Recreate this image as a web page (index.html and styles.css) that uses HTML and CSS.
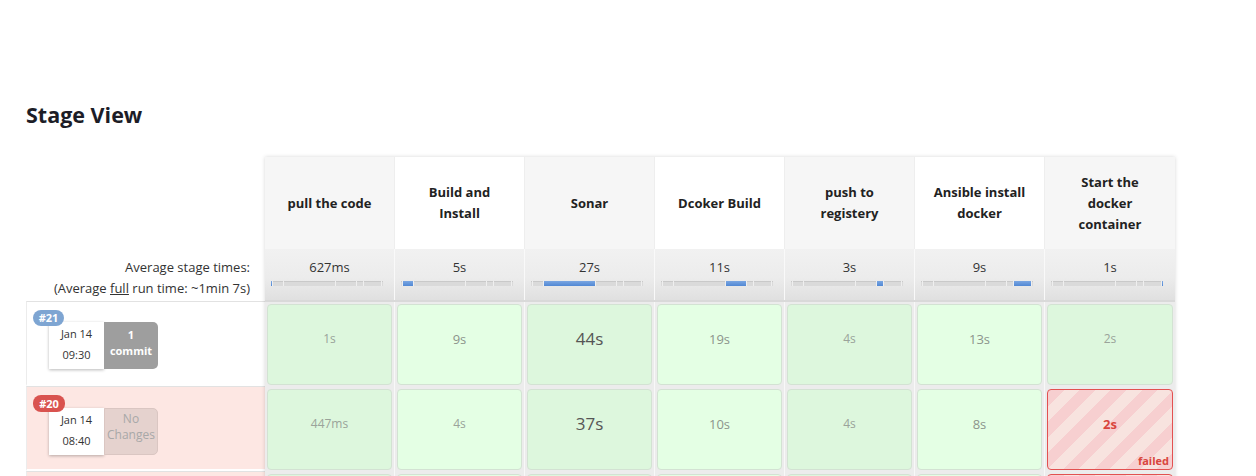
FILE: index.html
```html
<!DOCTYPE html>
<html>
<head>
<meta charset="utf-8">
<title>Stage View</title>
<link rel="stylesheet" href="styles.css">
</head>
<body>
<main class="page">
  <h2 class="title">Stage View</h2>
  <div class="stage-view">
    <div class="runs-col">
      <div class="corner"></div>
      <div class="avg-label">
        <div>Average stage times:</div>
        <div>(Average <u>full</u> run time: ~1min 7s)</div>
      </div>
      <div class="run">
        <span class="badge badge-ok">#21</span>
        <div class="tag">
          <div class="date"><span>Jan 14</span><span>09:30</span></div>
          <div class="changes">1<br>commit</div>
        </div>
      </div>
      <div class="run run-failed">
        <span class="badge badge-failed">#20</span>
        <div class="tag">
          <div class="date"><span>Jan 14</span><span>08:40</span></div>
          <div class="changes changes-none">No<br>Changes</div>
        </div>
      </div>
      <div class="run run-failed"></div>
    </div>

    <div class="stages">
      <div class="srow head">
        <div class="th">pull the code</div>
        <div class="th">Build and Install</div>
        <div class="th">Sonar</div>
        <div class="th">Dcoker Build</div>
        <div class="th">push to registery</div>
        <div class="th">Ansible install docker</div>
        <div class="th">Start the docker container</div>
      </div>

      <div class="srow avg">
        <div class="avg-cell">
          <div class="avg-time">627ms</div>
          <div class="bar"><span class="seg cur" style="width:1px"></span><span class="seg" style="width:11px"></span><span class="seg" style="width:52px"></span><span class="seg" style="width:21px"></span><span class="seg" style="width:7px"></span><span class="seg" style="width:18px"></span><span class="seg" style="width:2px"></span></div>
        </div>
        <div class="avg-cell">
          <div class="avg-time">5s</div>
          <div class="bar"><span class="seg" style="width:1px"></span><span class="seg cur" style="width:11px"></span><span class="seg" style="width:52px"></span><span class="seg" style="width:21px"></span><span class="seg" style="width:7px"></span><span class="seg" style="width:18px"></span><span class="seg" style="width:2px"></span></div>
        </div>
        <div class="avg-cell">
          <div class="avg-time">27s</div>
          <div class="bar"><span class="seg" style="width:1px"></span><span class="seg" style="width:11px"></span><span class="seg cur" style="width:52px"></span><span class="seg" style="width:21px"></span><span class="seg" style="width:7px"></span><span class="seg" style="width:18px"></span><span class="seg" style="width:2px"></span></div>
        </div>
        <div class="avg-cell">
          <div class="avg-time">11s</div>
          <div class="bar"><span class="seg" style="width:1px"></span><span class="seg" style="width:11px"></span><span class="seg" style="width:52px"></span><span class="seg cur" style="width:21px"></span><span class="seg" style="width:7px"></span><span class="seg" style="width:18px"></span><span class="seg" style="width:2px"></span></div>
        </div>
        <div class="avg-cell">
          <div class="avg-time">3s</div>
          <div class="bar"><span class="seg" style="width:1px"></span><span class="seg" style="width:11px"></span><span class="seg" style="width:52px"></span><span class="seg" style="width:21px"></span><span class="seg cur" style="width:7px"></span><span class="seg" style="width:18px"></span><span class="seg" style="width:2px"></span></div>
        </div>
        <div class="avg-cell">
          <div class="avg-time">9s</div>
          <div class="bar"><span class="seg" style="width:1px"></span><span class="seg" style="width:11px"></span><span class="seg" style="width:52px"></span><span class="seg" style="width:21px"></span><span class="seg" style="width:7px"></span><span class="seg cur" style="width:18px"></span><span class="seg" style="width:2px"></span></div>
        </div>
        <div class="avg-cell">
          <div class="avg-time">1s</div>
          <div class="bar"><span class="seg" style="width:1px"></span><span class="seg" style="width:11px"></span><span class="seg" style="width:52px"></span><span class="seg" style="width:21px"></span><span class="seg" style="width:7px"></span><span class="seg" style="width:18px"></span><span class="seg cur" style="width:2px"></span></div>
        </div>
      </div>

      <div class="srow body">
        <div class="col"><div class="cell ok t-xs">1s</div></div>
        <div class="col"><div class="cell ok t-s">9s</div></div>
        <div class="col"><div class="cell ok t-l">44s</div></div>
        <div class="col"><div class="cell ok t-s">19s</div></div>
        <div class="col"><div class="cell ok t-xs">4s</div></div>
        <div class="col"><div class="cell ok t-s">13s</div></div>
        <div class="col"><div class="cell ok t-xs">2s</div></div>
      </div>

      <div class="srow body">
        <div class="col"><div class="cell ok t-xs">447ms</div></div>
        <div class="col"><div class="cell ok t-xs">4s</div></div>
        <div class="col"><div class="cell ok t-l">37s</div></div>
        <div class="col"><div class="cell ok t-s">10s</div></div>
        <div class="col"><div class="cell ok t-xs">4s</div></div>
        <div class="col"><div class="cell ok t-s">8s</div></div>
        <div class="col"><div class="cell fail"><span class="fail-time">2s</span><span class="fail-label">failed</span></div></div>
      </div>

      <div class="srow body">
        <div class="col"><div class="cell ok"></div></div>
        <div class="col"><div class="cell ok"></div></div>
        <div class="col"><div class="cell ok"></div></div>
        <div class="col"><div class="cell ok"></div></div>
        <div class="col"><div class="cell ok"></div></div>
        <div class="col"><div class="cell ok"></div></div>
        <div class="col"><div class="cell fail"></div></div>
      </div>
    </div>
  </div>
</main>
</body>
</html>
```

FILE: styles.css
```css
* { box-sizing: border-box; }

html, body { overflow: hidden; }

body {
  margin: 0;
  background: #fff;
  color: #333;
  font-family: "Open Sans", "Noto Sans", "DejaVu Sans", sans-serif;
}

.page { padding: 0 26px; }

.title {
  margin: 100px 0 27px;
  font-size: 21.5px;
  line-height: 30px;
  font-weight: 700;
  color: #1d1d27;
}

.stage-view {
  display: flex;
  align-items: flex-start;
}

/* ---------- left column ---------- */
.runs-col { width: 239px; flex: none; }

.corner { height: 92px; }

.avg-label {
  height: 52px;
  padding: 8px 15px 0 0;
  text-align: right;
  font-size: 13px;
  line-height: 21px;
  color: #333;
}

.run {
  height: 85px;
  border-top: 1px solid #e2e2e2;
  border-bottom: 2px solid #fff;
  border-left: 1px solid #ececec;
  padding: 8px 0 0 6px;
  background: #fff;
}

.run-failed { background: #fde7e3; }

.badge {
  position: relative;
  z-index: 1;
  display: block;
  width: 31px;
  height: 16px;
  border-radius: 8px;
  color: #fff;
  font-size: 11px;
  font-weight: 700;
  line-height: 16px;
  text-align: center;
}

.badge-ok { background: #7ea5d2; }
.badge-failed { background: #d9534f; width: 32px; height: 17px; line-height: 17px; }

.tag {
  display: flex;
  margin: -4px 0 0 16px;
}

.date {
  width: 55px;
  height: 47px;
  padding-top: 1px;
  display: flex;
  flex-direction: column;
  align-items: center;
  background: #fff;
  box-shadow: 0 1px 3px rgba(0, 0, 0, 0.28);
  font-size: 11px;
  line-height: 21px;
  color: #333;
}

.changes {
  width: 54px;
  height: 47px;
  padding-top: 5px;
  border-radius: 0 5px 5px 0;
  background: #9e9e9e;
  color: #fff;
  font-size: 11px;
  font-weight: 700;
  line-height: 16px;
  text-align: center;
}

.changes-none {
  padding-top: 2px;
  background: #e5d2ce;
  border: 1px solid #dac6c2;
  color: #a8a8a8;
  font-size: 12px;
  font-weight: 400;
}

/* ---------- stages block ---------- */
.stages {
  width: 910px;
  flex: none;
  background: #fff;
  box-shadow: 0 0 4px rgba(0, 0, 0, 0.16);
}

.srow { display: flex; }

.th {
  width: 130px;
  height: 92px;
  padding: 0 16px;
  display: flex;
  align-items: center;
  justify-content: center;
  text-align: center;
  font-size: 13px;
  font-weight: 700;
  line-height: 21px;
  color: #222;
  border-right: 1px solid #eeeeee;
  background: #fff;
}

.th:nth-child(odd) { background: #f6f6f6; }
.th:last-child { border-right: 0; }

.avg {
  border-bottom: 2px solid #d9d9d9;
}

.avg-cell {
  width: 130px;
  height: 51px;
  padding: 8px 6px 0;
  border-right: 1px solid #f9f9f9;
  background: linear-gradient(#f1f1f1 0%, #ececec 55%, #e0e0e0 100%);
}

.avg-cell:last-child { border-right: 0; }

.avg-time {
  height: 24px;
  text-align: center;
  font-size: 13px;
  line-height: 20px;
  color: #333;
}

.bar {
  display: flex;
  width: 112px;
  height: 5px;
  background: #dadada;
  box-shadow: inset 0 1px 0 #c9c9c9;
}

.seg {
  height: 100%;
  border-left: 1px solid #efefef;
}

.seg:first-child { border-left: 0; }

.seg.cur {
  background: linear-gradient(#7aa6e2, #5188d4);
}

.body { height: 85px; }

.col {
  width: 130px;
  height: 85px;
  padding: 2px;
  border-right: 1px solid #f8f8f8;
  background: #ececec;
}

.col:last-child { border-right: 0; }

.cell {
  height: 81px;
  padding-top: 24px;
  border-radius: 4px;
  border: 1px solid #d3e2d3;
  text-align: center;
  line-height: 20px;
}

.col:nth-child(odd) .cell.ok { background: #ddf7dd; }
.col:nth-child(even) .cell.ok { background: #e4ffe4; }

.t-xs { font-size: 12px; color: #9aa39a; }
.t-s { font-size: 13px; color: #8c948c; }
.t-l { font-size: 17px; color: #555; }

.cell.fail {
  display: flex;
  flex-direction: column;
  align-items: center;
  padding: 24px 3px 1px;
  border-color: #e35151;
  background: repeating-linear-gradient(-45deg, #f7cfd0 0 11px, #f8e3df 11px 22px);
  color: #d9453d;
  font-weight: 700;
}

.fail-time { font-size: 13px; }

.fail-label {
  margin-top: auto;
  align-self: flex-end;
  font-size: 11px;
  line-height: 15px;
}
```
